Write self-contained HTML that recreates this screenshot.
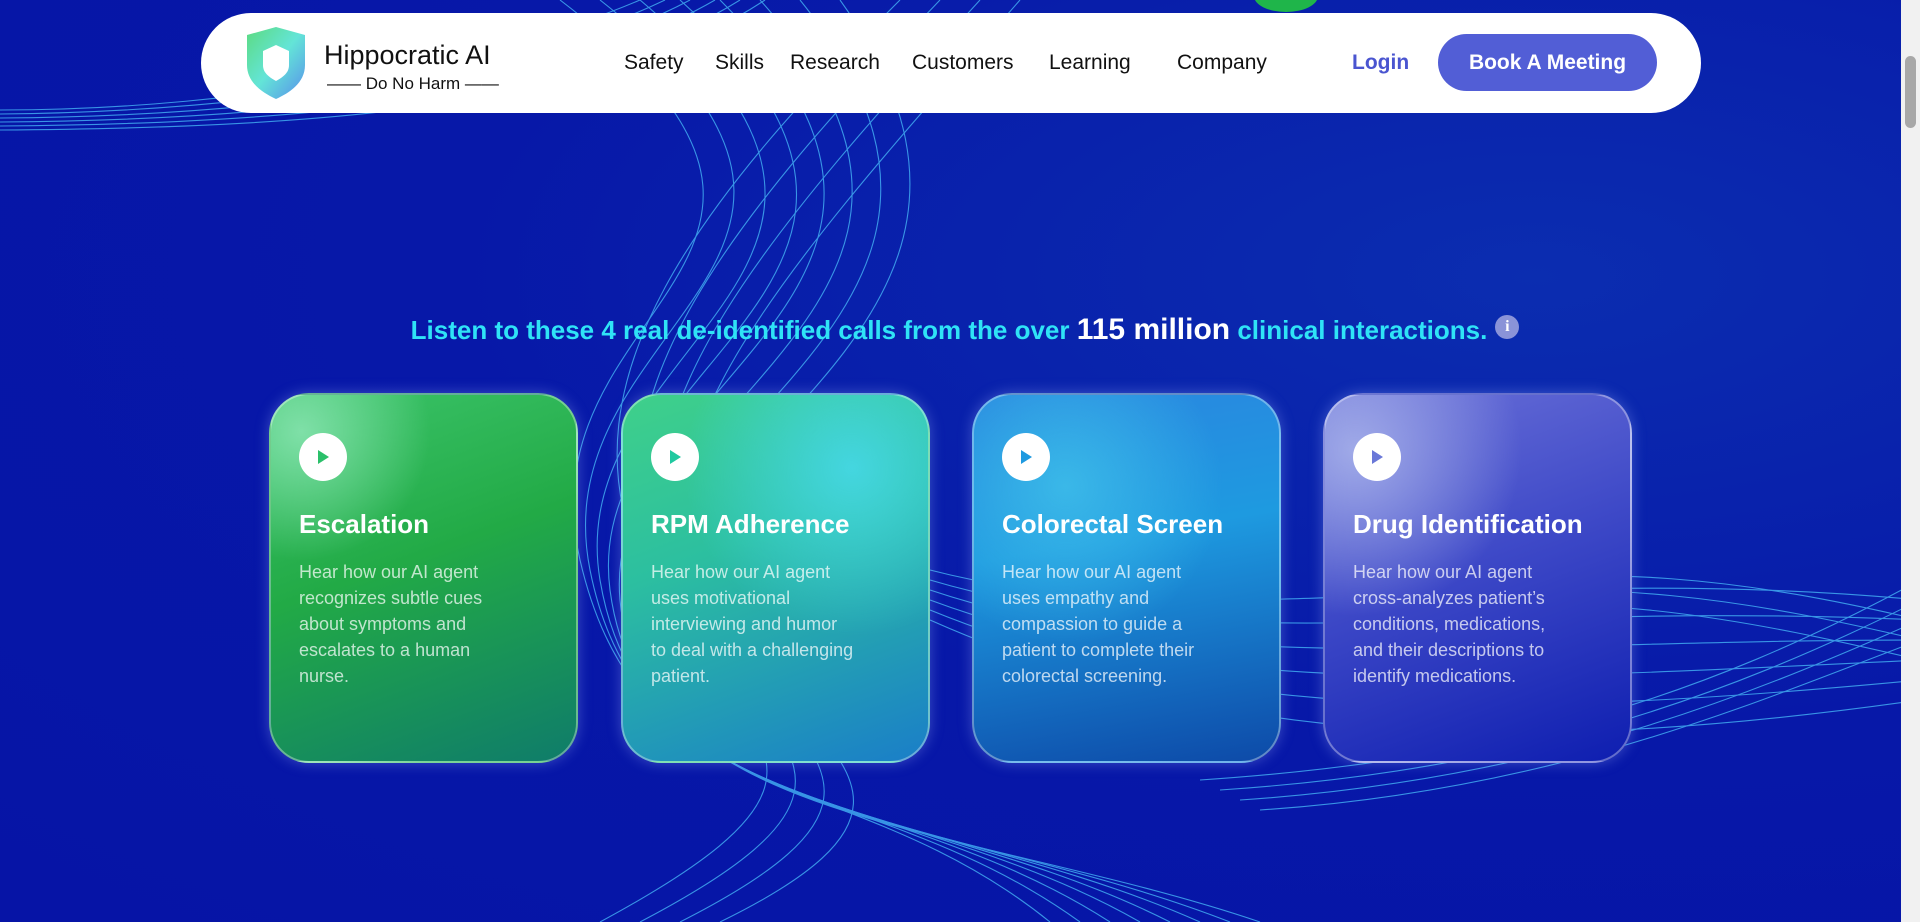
<!DOCTYPE html>
<html><head><meta charset="utf-8"><style>
*{margin:0;padding:0;box-sizing:border-box}
body{width:1920px;height:922px;overflow:hidden;font-family:"Liberation Sans",sans-serif;background:radial-gradient(ellipse at 80% 30%,#0b2db0 0%,#0718a8 50%,#0614a6 100%);position:relative}
svg.bg{position:absolute;left:0;top:0}
.hdr{position:absolute;left:201px;top:13px;width:1500px;height:100px;background:#fff;border-radius:50px}
.brand{position:absolute;left:123px;top:27px;font-size:27px;color:#111}
.tag{position:absolute;left:126px;top:61px;font-size:17px;color:#111}
.nav{position:absolute;top:38px;font-size:21px;color:#111}
.login{position:absolute;left:1151px;top:38px;font-size:21px;color:#4a55d0;font-weight:bold}
.btn{position:absolute;left:1237px;top:21px;width:219px;height:57px;border-radius:29px;background:#525ed6;color:#fff;font-weight:bold;font-size:21px;text-align:center;line-height:57px}
.head{position:absolute;left:0;width:1920px;top:313px;text-align:center;font-size:26px;font-weight:bold;color:#2fe3f6;padding-left:10px}
.head b{color:#fff;font-size:30px}
.info{display:inline-block;width:24px;height:24px;border-radius:50%;background:#8a93d8;color:#fff;font-size:16px;line-height:24px;vertical-align:8px;margin-left:8px;font-family:"Liberation Serif",serif}
.card{position:absolute;top:393px;width:309px;height:370px;border-radius:40px;border:2px solid rgba(255,255,255,.35);box-shadow:0 0 14px rgba(160,180,255,.35)}
.play{position:absolute;left:28px;top:38px;width:48px;height:48px;border-radius:50%;background:#fff}
.play:after{content:"";position:absolute;left:19px;top:17px;border-left:11px solid var(--c);border-top:7px solid transparent;border-bottom:7px solid transparent}
.t{position:absolute;left:28px;top:114px;font-size:26px;font-weight:bold;color:#fff;white-space:nowrap}
.d{position:absolute;left:28px;top:164px;width:205px;font-size:18px;line-height:26px;color:rgba(255,255,255,.72)}
.sb{position:absolute;right:0;top:0;width:19px;height:922px;background:#f1f1f1}
.sb i{position:absolute;left:4px;top:56px;width:11px;height:72px;background:#a8a8a8;border-radius:6px}
</style></head><body>
<svg class="bg" width="1920" height="922" fill="none" stroke="#45b4f5" stroke-width="1.1" opacity=".8">
<g>
<path d="M0,110 C250,110 500,60 640,0"/><path d="M0,114 C260,112 520,70 665,0"/><path d="M0,118 C270,116 540,80 690,0"/><path d="M0,122 C280,120 560,90 715,0"/><path d="M0,126 C290,124 580,100 740,0"/><path d="M0,130 C300,128 600,110 765,0"/>
<path d="M560,0 C900,260 520,300 580,560 S850,760 1050,922"/><path d="M600,0 C930,260 540,320 590,570 S870,770 1080,922"/><path d="M640,0 C960,270 560,340 600,580 S890,780 1110,922"/><path d="M680,0 C990,280 580,360 610,590 S910,790 1140,922"/><path d="M720,0 C1010,290 600,380 620,600 S930,800 1170,922"/><path d="M760,0 C1030,300 620,400 630,610 S950,810 1200,922"/><path d="M800,0 C1050,310 640,420 640,620 S970,820 1230,922"/><path d="M840,0 C1070,320 660,440 650,630 S990,830 1260,922"/>
<path d="M900,0 C700,200 560,380 640,560 S900,760 600,922"/><path d="M940,0 C740,210 580,400 660,570 S930,770 640,922"/><path d="M980,0 C780,220 600,420 680,580 S960,780 680,922"/><path d="M1020,0 C820,230 620,440 700,590 S990,790 720,922"/>
<path d="M930,570 C1200,640 1500,560 1920,600"/><path d="M930,580 C1200,660 1500,600 1920,620"/><path d="M930,590 C1200,680 1500,640 1920,640"/><path d="M930,600 C1200,700 1500,680 1920,660"/><path d="M930,610 C1200,720 1500,720 1920,680"/><path d="M930,620 C1200,740 1500,760 1920,700"/>
<path d="M1200,780 C1500,760 1700,700 1920,580"/><path d="M1220,790 C1520,770 1720,700 1920,600"/><path d="M1240,800 C1540,780 1740,700 1920,620"/><path d="M1260,810 C1560,790 1760,700 1920,640"/>
<path d="M1400,590 C1600,560 1750,580 1920,620"/><path d="M1400,600 C1600,575 1750,600 1920,640"/><path d="M1400,610 C1600,590 1750,620 1920,660"/>
</g></svg>
<div style="position:absolute;left:1254px;top:-20px;width:64px;height:32px;border-radius:50%;background:#1fb54a"></div>
<div class="hdr">
<svg style="position:absolute;left:42px;top:12px" width="66" height="76" viewBox="0 0 66 76"><defs><linearGradient id="g" x1="0" y1="0" x2="1" y2="1"><stop offset="0" stop-color="#3fd46a"/><stop offset=".5" stop-color="#48e0d0"/><stop offset="1" stop-color="#3a7ae8"/></linearGradient></defs><path d="M4,10 L33,2 L62,10 L62,40 C62,58 46,68 33,74 C20,68 4,58 4,40 Z" fill="url(#g)" opacity=".85"/><path d="M20,26 L33,20 L46,26 L46,40 C46,48 40,52 33,56 C26,52 20,48 20,40 Z" fill="#fff"/></svg>
<div class="brand">Hippocratic AI</div>
<div class="tag">—— Do No Harm ——</div>
<div class="nav" style="left:423px">Safety</div>
<div class="nav" style="left:514px">Skills</div>
<div class="nav" style="left:589px">Research</div>
<div class="nav" style="left:711px">Customers</div>
<div class="nav" style="left:848px">Learning</div>
<div class="nav" style="left:976px">Company</div>
<div class="login">Login</div>
<div class="btn">Book A Meeting</div>
</div>
<div class="head">Listen to these 4 real de-identified calls from the over <b>115 million</b> clinical interactions.<span class="info">i</span></div>
<div class="card" style="left:269px;--c:#2bc06a;background:radial-gradient(circle at 10% 10%,#7fe0a8 0%,transparent 30%),linear-gradient(160deg,#3cc46a 0%,#22aa46 45%,#0f7c6a 100%)"><div class="play"></div><div class="t">Escalation</div><div class="d">Hear how our AI agent recognizes subtle cues about symptoms and escalates to a human nurse.</div></div>
<div class="card" style="left:621px;--c:#20c9a0;background:radial-gradient(circle at 75% 20%,#44d6e0 0%,transparent 45%),linear-gradient(160deg,#3fd08a 0%,#2cbfa0 40%,#1a7ec8 100%)"><div class="play"></div><div class="t">RPM Adherence</div><div class="d">Hear how our AI agent uses motivational interviewing and humor to deal with a challenging patient.</div></div>
<div class="card" style="left:972px;--c:#1f9ae0;background:radial-gradient(circle at 30% 25%,#3ab8e8 0%,transparent 45%),linear-gradient(170deg,#2a86e0 0%,#1e9ae0 40%,#0d4aa8 100%)"><div class="play"></div><div class="t">Colorectal Screen</div><div class="d">Hear how our AI agent uses empathy and compassion to guide a patient to complete their colorectal screening.</div></div>
<div class="card" style="left:1323px;--c:#6a78d8;background:radial-gradient(circle at 10% 15%,#a0aae8 0%,transparent 40%),linear-gradient(160deg,#6a70d8 0%,#3f4ac8 45%,#0e1eb0 100%)"><div class="play"></div><div class="t">Drug Identification</div><div class="d" style="width:215px">Hear how our AI agent cross-analyzes patient’s conditions, medications, and their descriptions to identify medications.</div></div>
<div class="sb"><i></i></div>
</body></html>
